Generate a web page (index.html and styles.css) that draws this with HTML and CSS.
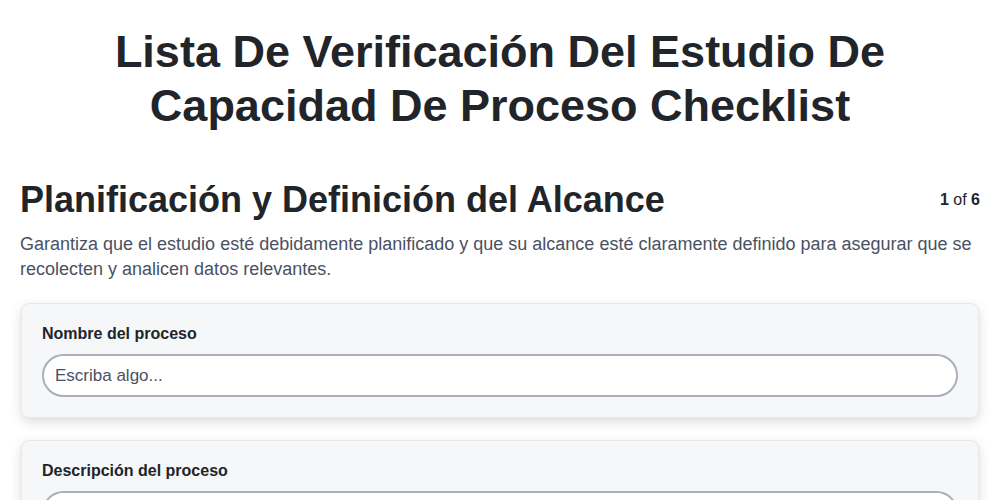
FILE: index.html
```html
<!DOCTYPE html>
<html lang="es">
<head>
<meta charset="utf-8">
<title>Checklist</title>
<link rel="stylesheet" href="styles.css">
</head>
<body>
<main class="page">
  <h1 class="title">Lista De Verificación Del Estudio De Capacidad De Proceso Checklist</h1>
  <section class="section">
    <div class="section-head">
      <h2 class="section-title">Planificación y Definición del Alcance</h2>
      <div class="pager"><b>1</b> of <b>6</b></div>
    </div>
    <p class="section-desc">Garantiza que el estudio esté debidamente planificado y que su alcance esté claramente definido para asegurar que se recolecten y analicen datos relevantes.</p>
    <div class="cards">
      <div class="card">
        <label class="card-label">Nombre del proceso</label>
        <input class="field" type="text" placeholder="Escriba algo...">
      </div>
      <div class="card">
        <label class="card-label">Descripción del proceso</label>
        <input class="field" type="text" placeholder="Escriba algo...">
      </div>
    </div>
  </section>
</main>
</body>
</html>
```

FILE: styles.css
```css
* { box-sizing: border-box; }
html, body { margin: 0; padding: 0; background: #ffffff; }
body {
  font-family: "Liberation Sans", Arial, Helvetica, sans-serif;
  color: #212529;
}
.page {
  padding: 25px 20px 40px;
}
.title {
  margin: 0 auto;
  max-width: 840px;
  text-align: center;
  font-size: 45px;
  line-height: 54px;
  font-weight: 700;
  color: #212529;
}
.section { margin-top: 45px; }
.section-head {
  display: flex;
  justify-content: space-between;
  align-items: center;
}
.section-title {
  margin: 0;
  font-size: 36px;
  line-height: 44px;
  font-weight: 700;
  color: #212529;
}
.pager {
  font-size: 16px;
  color: #212529;
}
.section-desc {
  margin: 10px 0 0;
  font-size: 18px;
  line-height: 25px;
  color: #4a5162;
}
.cards {
  margin-top: 21px;
  display: flex;
  flex-direction: column;
  gap: 22px;
  padding: 0 1px 0 1px;
}
.card {
  background: #f6f7f9;
  border: 1px solid #e6e8ec;
  border-radius: 8px;
  box-shadow: 0 4px 12px rgba(0, 0, 0, 0.14);
  padding: 20px 20px 20px;
  display: flex;
  flex-direction: column;
}
.card-label {
  font-size: 16px;
  font-weight: 700;
  line-height: 20px;
  color: #212529;
  margin-bottom: 10px;
}
.field {
  height: 43px;
  border: 2px solid #a9b0b8;
  border-radius: 22px;
  background: #ffffff;
  padding: 0 11px;
  font-family: "Liberation Sans", Arial, sans-serif;
  font-size: 17px;
  color: #212529;
  outline: none;
}
.field::placeholder { color: #4a5162; opacity: 1; }
```
